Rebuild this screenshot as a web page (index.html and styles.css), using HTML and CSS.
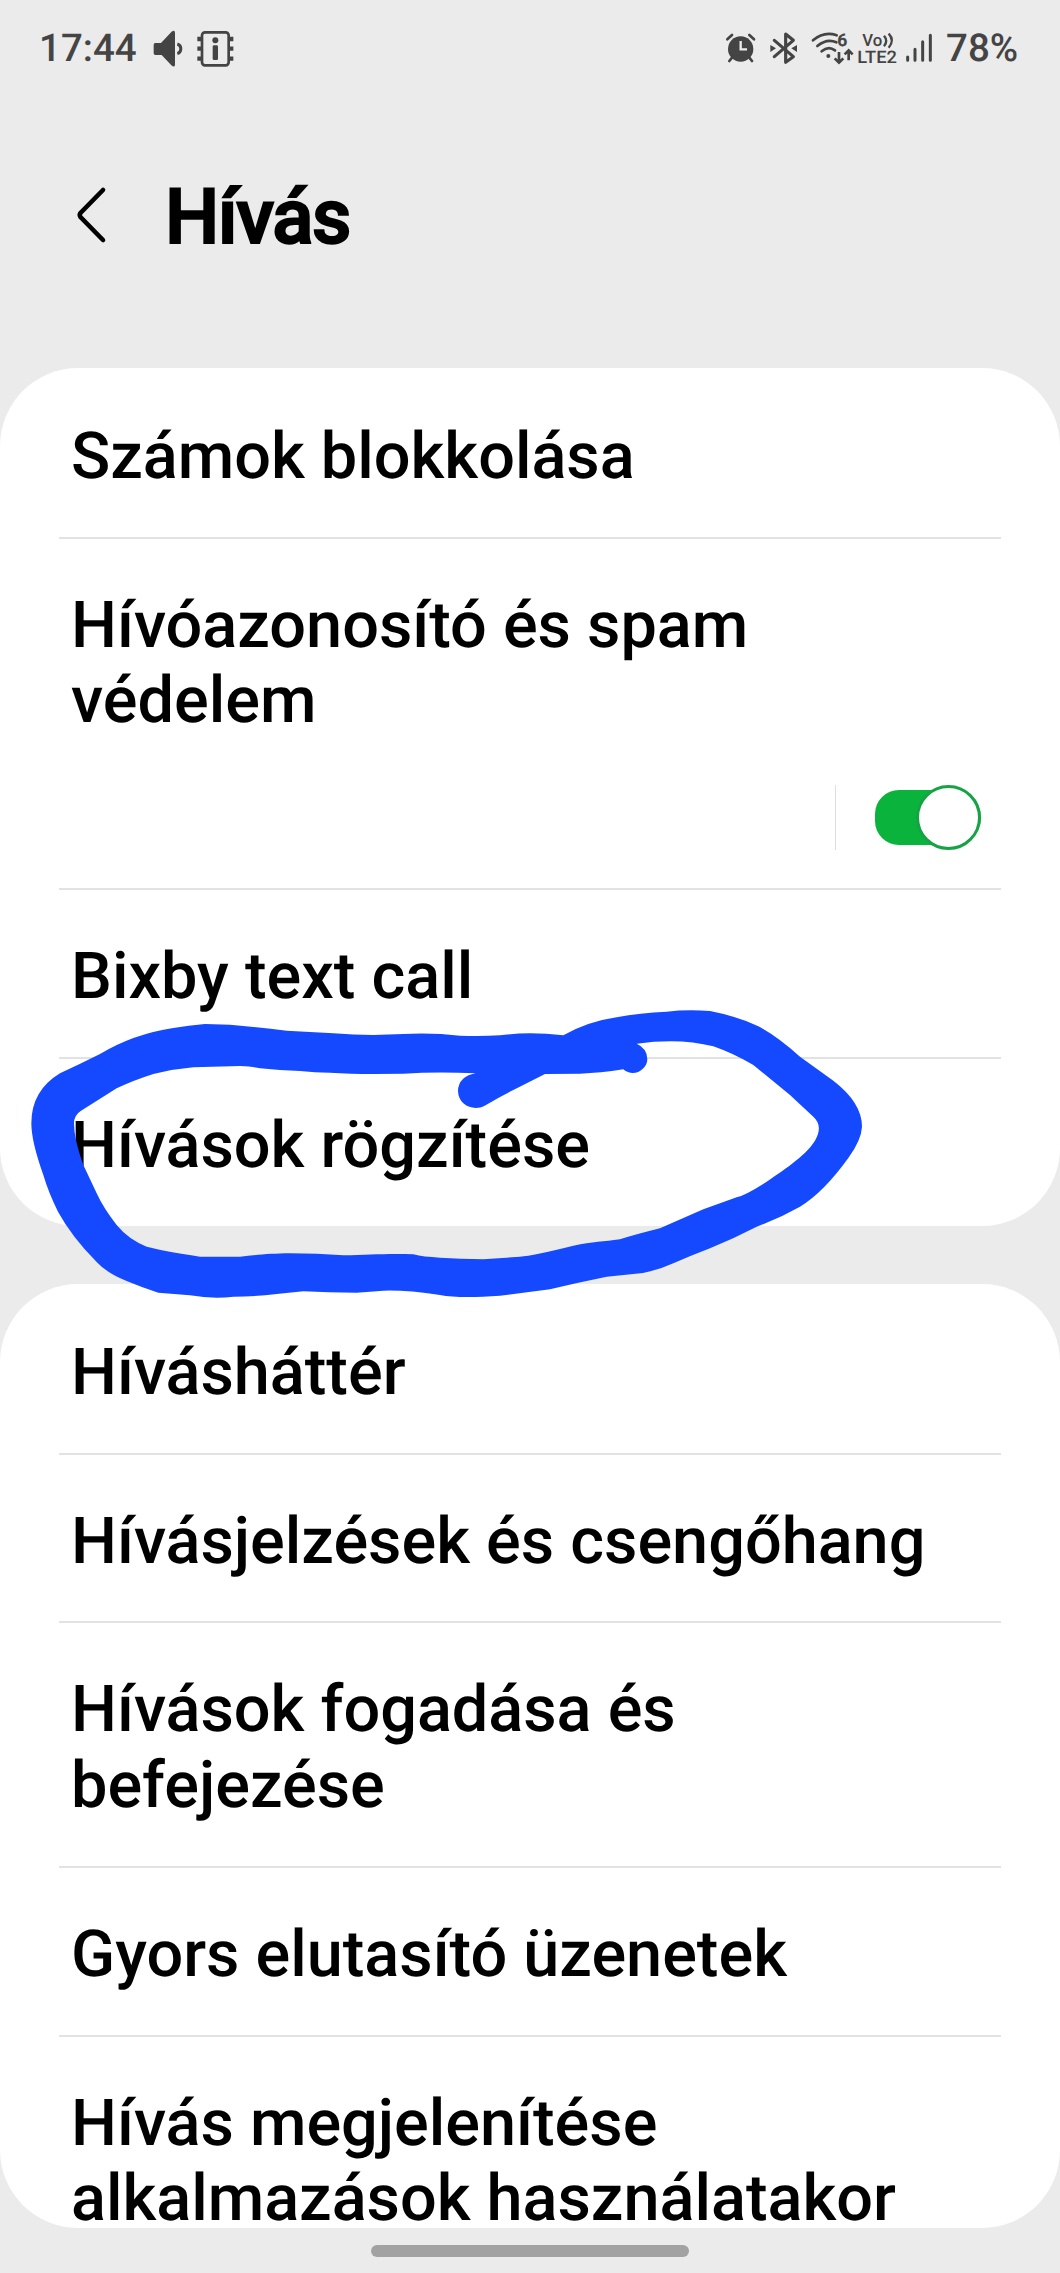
FILE: index.html
```html
<!DOCTYPE html>
<html lang="hu">
<head>
<meta charset="utf-8">
<title>Hívás</title>
<link rel="stylesheet" href="styles.css">
</head>
<body>
<div class="screen">
  <header class="status">
    <div class="status-left">
      <span class="clock">17:44</span>
      <svg class="ic-sound" viewBox="459 90 93 111"><path d="M466 129H483L514 96Q524 88 525 98V194Q524 204 514 196L485 165H466Q461 165 461 160V134Q461 129 466 129Z" fill="currentColor"/><path d="M532 132A14 15 0 0 1 532 161" fill="none" stroke="currentColor" stroke-width="9"/></svg>
      <svg class="ic-info" viewBox="588 90 114 111"><rect x="606" y="97" width="80" height="99" rx="9" fill="none" stroke="currentColor" stroke-width="8"/><path d="M592 117H606M592 146H606M592 176H606M686 117H700M686 146H700M686 176H700" stroke="currentColor" stroke-width="13"/><circle cx="646" cy="121" r="9" fill="currentColor"/><rect x="638" y="136" width="16" height="44" rx="4" fill="currentColor"/></svg>
    </div>
    <div class="status-right">
      <svg class="ic-alarm" viewBox="78 66 87 99"><circle cx="122" cy="117" r="38" fill="currentColor"/><path d="M82 88L96 75M162 88L148 75M96 143L88 153M148 143L156 153" stroke="currentColor" stroke-width="8" stroke-linecap="round"/><path d="M122 93V118H141" fill="none" stroke="#ebebeb" stroke-width="7"/></svg>
      <svg class="ic-bt" viewBox="210 66 84 99"><path d="M223 91L280 140L257 157V72L280 91L223 140" fill="none" stroke="currentColor" stroke-width="9.500" stroke-linejoin="round" stroke-linecap="round"/><path d="M211 105L228 115L211 126ZM291 105L274 115L291 126Z" fill="currentColor"/></svg>
      <svg class="ic-wifi" viewBox="333 66 132 99"><path d="M339 91Q372 63 410 76M352 108Q381 84 409 97M365 124Q385 106 405 121" fill="none" stroke="currentColor" stroke-width="8" stroke-linecap="round"/><circle cx="385" cy="138" r="6" fill="currentColor"/><path d="M417 126V156M404 145L417 158L430 145M446 151V122M434 133L446 121L458 133" fill="none" stroke="currentColor" stroke-width="8"/><text x="412" y="108" font-size="51" stroke="currentColor" stroke-width="1.500" textLength="30" lengthAdjust="spacingAndGlyphs">6</text></svg>
      <svg class="ic-volte" viewBox="471 66 123 99"><text x="487" y="108" font-size="51" textLength="60" lengthAdjust="spacingAndGlyphs">Vo</text><path d="M552 77Q565 92 552 109M566 71Q585 91 566 113" fill="none" stroke="currentColor" stroke-width="7"/><text x="472" y="160" font-size="52" textLength="119" lengthAdjust="spacingAndGlyphs">LTE2</text></svg>
      <svg class="ic-signal" viewBox="615 66 84 99"><path d="M623 141V151M645 118V151M668 95V151M691 76V151" stroke="currentColor" stroke-width="9" stroke-linecap="round"/></svg>
      <span class="battery">78%</span>
    </div>
  </header>

  <div class="titlebar">
    <svg class="back" viewBox="0 0 30 56"><path d="M27 3L4.500 26Q3 28 4.500 30L27 53" fill="none" stroke="#000" stroke-width="4.600" stroke-linecap="round"/></svg>
    <h1>Hívás</h1>
  </div>

  <main>
    <section class="card card-first">
      <div class="row">Számok blokkolása</div>
      <div class="row">
        <div>Hívóazonosító és spam<br>védelem</div>
        <div class="control"><span class="split"></span><span class="toggle"><span class="knob"></span></span></div>
      </div>
      <div class="row">Bixby text call</div>
      <div class="row">Hívások rögzítése</div>
      <svg class="marker" viewBox="0 0 3180 1080"><path fill="#1449ff" fill-rule="evenodd" d="M94 490Q94 392 180 340Q240 312 300 282Q400 222 520 204Q565 196 615 192L690 194Q780 203 860 212L1000 220Q1060 225 1120 225L1210 222Q1300 218 1380 227Q1440 230 1500 226Q1585 214 1690 226Q1765 184 1850 172Q1920 158 2000 155Q2060 148 2130 153Q2210 168 2275 199Q2330 228 2400 290L2500 362Q2586 428 2586 500Q2584 540 2545 594Q2470 698 2400 740Q2340 774 2270 800Q2200 836 2130 865Q2075 886 2020 910Q1960 938 1900 942L1820 950Q1730 968 1650 988L1500 1007Q1380 1016 1320 1005Q1220 990 1150 992L1070 998Q985 998 910 994L830 1002Q760 1010 700 1010Q640 1018 570 1006L475 998Q425 982 380 963Q320 939 290 906Q215 830 174 755Q146 699 130 645Q94 545 94 490Z
      M222 490Q222 466 242 453L350 385Q400 361 460 342Q520 327 580 322L720 318Q760 320 780 325Q840 332 900 333Q945 338 990 338Q1050 342 1120 342L1210 341Q1310 335 1427 340Q1375 350 1374 393C1375 438 1423 454 1454 437Q1500 410 1540 390L1635 342L1740 341Q1800 339 1870 328C1900 355 1942 329 1942 298Q1942 265 1910 251Q2040 233 2140 259Q2200 280 2260 315L2370 405L2440 470Q2470 497 2446 540C2424 580 2360 625 2300 665Q2240 704 2210 712L2110 748L1980 805Q1900 825 1860 838C1810 846 1780 844 1720 857Q1600 887 1560 890L1450 898Q1380 896 1320 893Q1270 891 1240 883C1170 880 1110 884 1030 886Q950 880 870 880C810 881 770 884 720 890H600Q490 873 440 860Q385 838 350 795Q310 744 290 700L250 615Q222 538 222 490Z"/></svg>
    </section>
    <section class="card card-second">
      <div class="row">Hívásháttér</div>
      <div class="row">Hívásjelzések és csengőhang</div>
      <div class="row">Hívások fogadása és<br>befejezése</div>
      <div class="row">Gyors elutasító üzenetek</div>
      <div class="row">Hívás megjelenítése<br>alkalmazások használatakor</div>
    </section>
  </main>
  <div class="home"></div>
</div>
</body>
</html>
```
FILE: styles.css
```css
* { box-sizing: border-box; }
body { margin: 0; background: #ebebeb; font-family: Roboto, sans-serif; color: #000; text-rendering: geometricPrecision; }
.screen { width: 1060px; height: 2273px; overflow: hidden; display: flex; flex-direction: column; }
svg { display: block; flex: none; overflow: visible; }
.status { height: 97px; flex: none; display: flex; justify-content: space-between; padding: 0 40px 0 39px; color: #444; font-size: 38.500px; font-weight: 500; }
.status text { font-family: Roboto, sans-serif; font-weight: 500; fill: currentColor; }
.status-left, .status-right { display: flex; align-items: center; height: 97px; }
.clock { width: 114px; padding-bottom: 1px; }
.ic-sound { width: 31px; height: 37px; margin-right: 12px; }
.ic-info { width: 38px; height: 37px; }
.ic-alarm { width: 29px; height: 33px; margin-right: 15px; }
.ic-bt { width: 28px; height: 33px; margin-right: 13px; }
.ic-wifi { width: 44px; height: 33px; margin-right: 2px; }
.ic-volte { width: 41px; height: 33px; margin-right: 7px; }
.ic-signal { width: 28px; height: 33px; margin-right: 13px; }
.battery { width: 74px; padding-bottom: 1px; }
.titlebar { height: 271px; flex: none; display: flex; padding: 90px 0 0 76px; }
.back { width: 30px; height: 56px; margin-right: 59px; }
h1 { margin: -16px 0 0; font-size: 76.500px; line-height: 92px; font-weight: 500; -webkit-text-stroke: 2px #000; letter-spacing: -1.500px; }
main { display: flex; flex-direction: column; gap: 58.500px; flex: none; height: 1860px; }
.card { background: #fff; border-radius: 78px; flex: none; }
.card-first { position: relative; height: 857.500px; }
.card-second { height: 944px; }
.row { margin: 0 59px; padding: 51px 12px 42px; font-size: 64.800px; line-height: 75.700px; font-weight: 500; white-space: nowrap; }
.row + .row { padding-top: 49px; border-top: 2px solid #e2e2e4; }
.control { display: flex; align-items: center; justify-content: flex-end; height: 65px; margin: 46px 8px -4px 0; }
.split { width: 1px; height: 65px; background: #dedede; margin-right: 39px; }
.toggle { width: 106px; height: 55px; border-radius: 28px 32px 32px 28px; background: #0ab43c; display: flex; align-items: center; justify-content: flex-end; }
.knob { flex: none; width: 65px; height: 65px; border-radius: 50%; background: #fff; border: 3px solid #17a345; }
.marker { position: absolute; left: 0; top: 592px; width: 1060px; height: 360px; }
.home { width: 318px; height: 12px; border-radius: 6px; background: #a2a2a2; margin: 17px auto 0; flex: none; }
```
